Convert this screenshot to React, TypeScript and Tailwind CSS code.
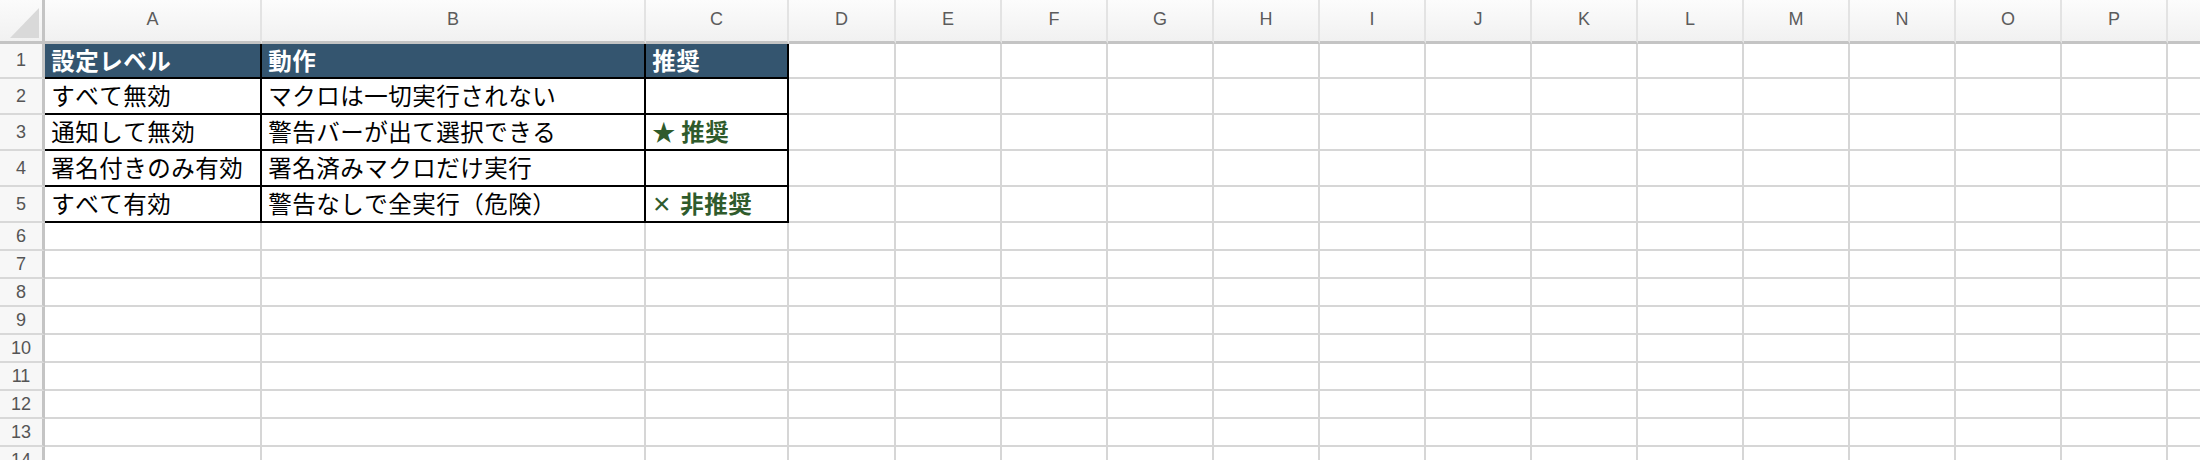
import React from "react";

const COLS = ["A", "B", "C", "D", "E", "F", "G", "H", "I", "J", "K", "L", "M", "N", "O", "P", "Q"];
const ROW_H = [35, 36, 36, 36, 36, 28, 28, 28, 28, 28, 28, 28, 28, 28];

type Cell = { text?: React.ReactNode; kind?: "head" | "body" | "green" };

function FW({ s }: { s: string }) {
  return (
    <span className="inline-flex">
      {Array.from(s).map((ch, i) => (
        <span key={i} className="inline-block w-[24px] text-center">
          {ch}
        </span>
      ))}
    </span>
  );
}

const data: Cell[][] = [
  [
    { text: <FW s="設定レベル" />, kind: "head" },
    { text: <FW s="動作" />, kind: "head" },
    { text: <FW s="推奨" />, kind: "head" },
  ],
  [{ text: <FW s="すべて無効" />, kind: "body" }, { text: <FW s="マクロは一切実行されない" />, kind: "body" }, { kind: "body" }],
  [
    { text: <FW s="通知して無効" />, kind: "body" },
    { text: <FW s="警告バーが出て選択できる" />, kind: "body" },
    {
      kind: "green",
      text: (
        <>
          <span className="inline-block w-[29px] font-bold">★</span>
          <span className="font-bold">
            <FW s="推奨" />
          </span>
        </>
      ),
    },
  ],
  [{ text: <FW s="署名付きのみ有効" />, kind: "body" }, { text: <FW s="署名済みマクロだけ実行" />, kind: "body" }, { kind: "body" }],
  [
    { text: <FW s="すべて有効" />, kind: "body" },
    { text: <FW s="警告なしで全実行（危険）" />, kind: "body" },
    {
      kind: "green",
      text: (
        <>
          <span className="inline-block w-[28px] pl-[1px] font-normal text-[30px] leading-none font-['Liberation_Sans',Arial,sans-serif]">×</span>
          <span className="font-bold">
            <FW s="非推奨" />
          </span>
        </>
      ),
    },
  ],
];

export default function App() {
  return (
    <div className="w-[2200px] h-[460px] overflow-hidden bg-white">
      <div
        className="grid"
        style={{
          gridTemplateColumns: "45px 217px 384px 143px 107px repeat(13, 106px)",
          gridTemplateRows: `44px ${ROW_H.map((h) => h + "px").join(" ")}`,
        }}
      >
        {/* corner */}
        <div className="relative box-border border-r-[3px] border-b-[3px] border-r-[#c4c4c4] border-b-[#c4c4c4] bg-gradient-to-b from-[#fbfbfb] to-[#f1f1f1]">
          <svg className="absolute left-0 top-0" width="42" height="41" viewBox="0 0 42 41">
            <polygon points="39,8 39,38 10,38" fill="#d9d9d9" />
          </svg>
        </div>
        {COLS.map((c) => (
          <div
            key={c}
            className="box-border flex items-center justify-center border-r-2 border-b-[3px] border-r-[#e3e3e3] border-b-[#c4c4c4] bg-gradient-to-b from-[#fcfcfc] to-[#f1f1f1] pb-[2px] text-[18px] text-[#5c5c5c] font-['Liberation_Sans',Arial,sans-serif]"
          >
            {c}
          </div>
        ))}
        {ROW_H.map((_, r) => {
          const row = data[r];
          return (
            <React.Fragment key={r}>
              <div className="box-border flex items-center justify-center border-r-[3px] border-b-2 border-r-[#c4c4c4] border-b-[#d8d8d8] bg-[#f7f7f7] text-[18px] text-[#555555] font-['Liberation_Sans',Arial,sans-serif]">
                {r + 1}
              </div>
              {COLS.map((c, ci) => {
                const cell = row && ci < 3 ? row[ci] : undefined;
                if (cell) {
                  const base =
                    "box-border flex items-center overflow-hidden whitespace-nowrap border-r-2 border-b-2 border-black pl-[6px] text-[23.5px] leading-none font-['Noto_Sans_CJK_JP','Noto_Sans',sans-serif]";
                  const cls =
                    cell.kind === "head"
                      ? " bg-[#34556f] text-white font-bold"
                      : cell.kind === "green"
                      ? " bg-white text-[#2f5b2c]"
                      : " bg-white text-black";
                  return (
                    <div key={c} className={base + cls}>
                      {cell.text}
                    </div>
                  );
                }
                return (
                  <div
                    key={c}
                    className="box-border border-r-2 border-b-2 border-[#d6d6d6] bg-white"
                  />
                );
              })}
            </React.Fragment>
          );
        })}
      </div>
    </div>
  );
}
